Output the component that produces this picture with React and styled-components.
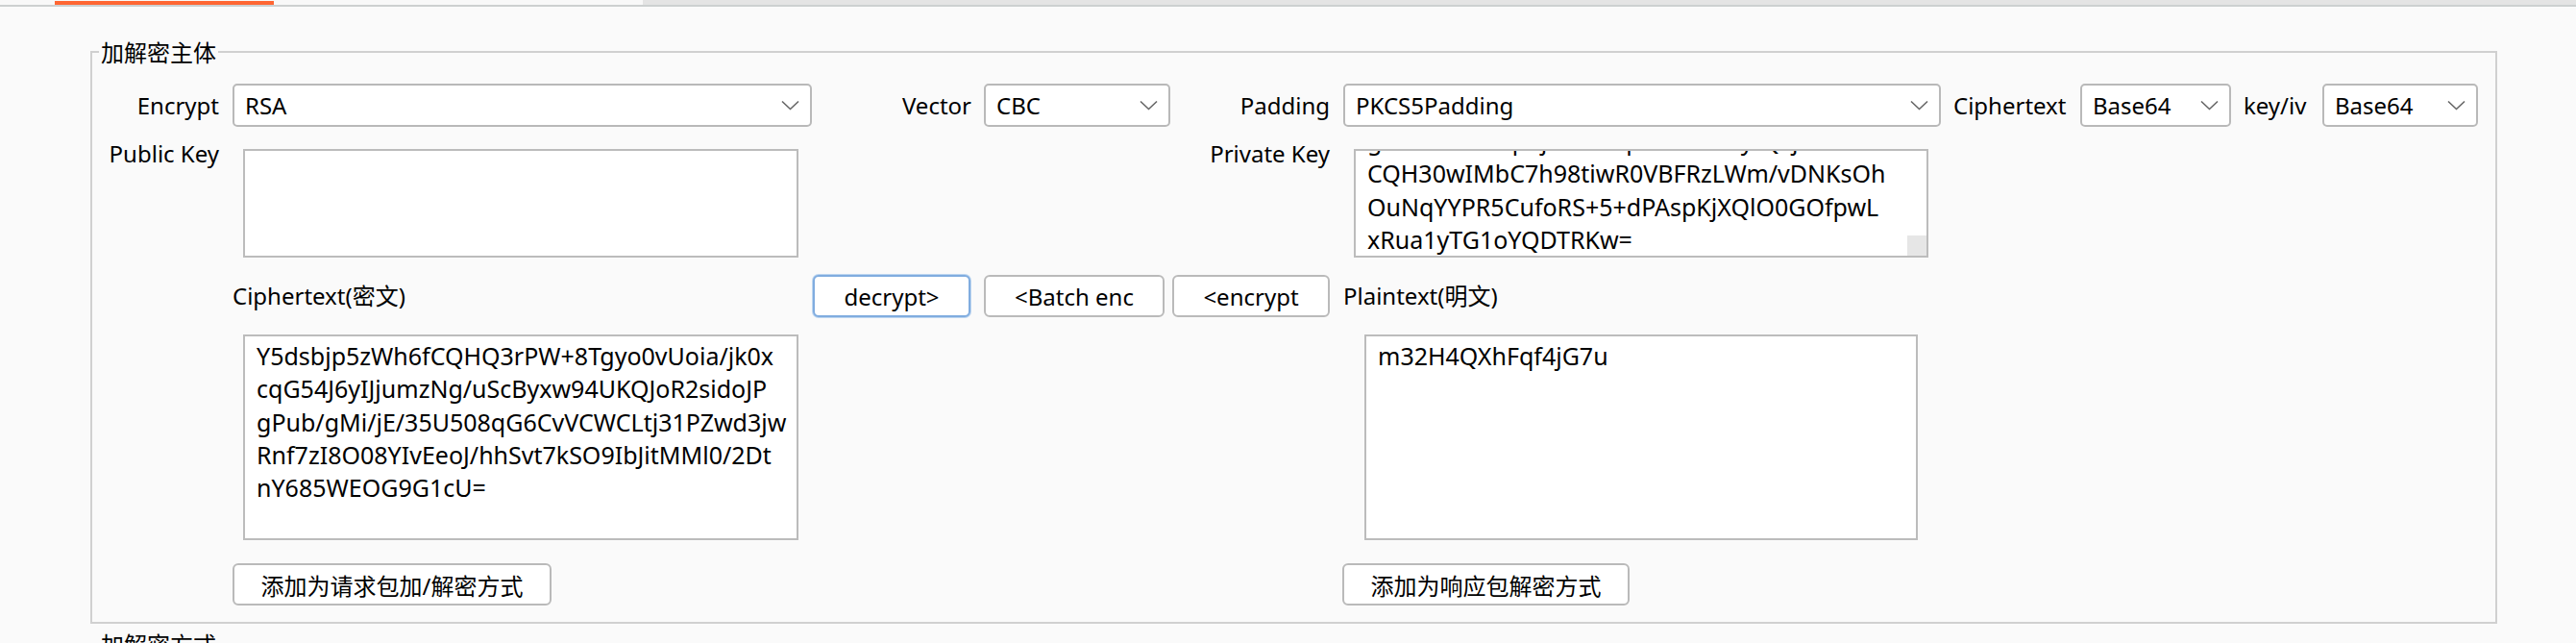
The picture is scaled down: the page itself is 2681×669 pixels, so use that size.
import React from "react";
import styled, { createGlobalStyle, css } from "styled-components";

const GlobalStyle = createGlobalStyle`
  html, body {
    margin: 0;
    padding: 0;
    background: #fafafa;
  }
  body {
    font-family: "Noto Sans", "Noto Sans CJK SC", sans-serif;
    font-size: 24px;
    color: #000;
  }
`;

const place = css`
  grid-column: ${(p) => p.$col};
  grid-row: ${(p) => p.$row};
  align-self: ${(p) => p.$align || "center"};
  justify-self: ${(p) => p.$justify || "start"};
  margin: ${(p) => p.$mt || 0}px ${(p) => p.$mr || 0}px 0 ${(p) => p.$ml || 0}px;
`;

const Page = styled.div`
  width: 2681px;
  height: 669px;
  overflow: hidden;
  background: #fafafa;
`;

const TabStrip = styled.div`
  display: flex;
  height: 5px;
  border-bottom: 2px solid #cdd0d0;
`;

const Tab = styled.div`
  width: 669px;
  box-sizing: border-box;
  padding: 1px 0 0 57px;
  background: #f8f8f8;
`;

const TabIndicator = styled.div`
  width: 228px;
  height: 4px;
  background: #ff6633;
`;

const TabRest = styled.div`
  flex: 1;
  background: #e4e4e4;
`;

const Body = styled.div`
  padding: 30px 0 0 94px;
`;

const Group = styled.fieldset`
  width: 2505px;
  box-sizing: border-box;
  min-width: 0;
  margin: ${(p) => p.$mt || 0}px 0 0 0;
  padding: 16px 0 17px 0;
  border: 2px solid #d0d0d0;
`;

const Legend = styled.legend`
  margin-left: 7px;
  padding: 0 2px;
  line-height: 34px;
  font-family: "Noto Sans CJK SC", sans-serif;
`;

const Grid = styled.div`
  display: grid;
  grid-template-columns: 146px 604px 178px 196px 178px 624px 1fr;
  grid-template-rows: 50px 113px 44px 214px 50px;
  row-gap: 18px;
`;

const Label = styled.div`
  ${place};
  width: ${(p) => (p.$w ? `${p.$w}px` : "auto")};
  white-space: nowrap;
  line-height: ${(p) => p.$lh || 34}px;
`;

const SelectBox = styled.div`
  ${place};
  display: flex;
  align-items: center;
  justify-content: space-between;
  box-sizing: border-box;
  width: ${(p) => p.$w}px;
  height: 45px;
  padding: 0 11px 0 11px;
  background: #fff;
  border: 2px solid #b9b9b9;
  border-radius: 5px;
  white-space: nowrap;
`;

const OptionGroup = styled.div`
  ${place};
  display: flex;
  align-items: center;
  gap: 13px;
`;

const TextBox = styled.div`
  ${place};
  position: relative;
  box-sizing: border-box;
  width: ${(p) => p.$w}px;
  height: ${(p) => p.$h}px;
  padding: 3px 12px 0 12px;
  background: #fff;
  border: 2px solid #bcbcbc;
  overflow: hidden;
  font-size: 25px;
  line-height: 34.3px;
`;

const Scrolled = styled.div`
  margin-top: ${(p) => p.$offset || 0}px;
`;

const Line = styled.div`
  white-space: pre;
`;

const ScrollThumb = styled.div`
  position: absolute;
  right: 0;
  bottom: 0;
  width: 20px;
  height: 21px;
  background: #e6e6e6;
`;

const Button = styled.button`
  ${place};
  box-sizing: border-box;
  width: ${(p) => p.$w}px;
  height: 44px;
  padding: 0;
  font: inherit;
  font-family: "Noto Sans", "Noto Sans CJK SC", sans-serif;
  color: #000;
  background: #fff;
  border: 2px solid ${(p) => (p.$focused ? "#80acdf" : "#bababa")};
  border-radius: 6px;
  box-shadow: ${(p) => (p.$focused ? "0 0 0 1px #bcd5f0" : "none")};
  white-space: nowrap;
`;

const Chevron = () => (
  <svg width="19" height="11" viewBox="0 0 19 11">
    <polyline points="1,1.5 9.5,9.5 18,1.5" fill="none" stroke="#666" strokeWidth="1.6" />
  </svg>
);

const Select = ({ value, ...rest }) => (
  <SelectBox {...rest}>
    <span>{value}</span>
    <Chevron />
  </SelectBox>
);

const cipherLines = [
  "Y5dsbjp5zWh6fCQHQ3rPW+8Tgyo0vUoia/jk0x",
  "cqG54J6yIJjumzNg/uScByxw94UKQJoR2sidoJP",
  "gPub/gMi/jE/35U508qG6CvVCWCLtj31PZwd3jw",
  "Rnf7zI8O08YIvEeoJ/hhSvt7kSO9IbJitMMl0/2Dt",
  "nY685WEOG9G1cU=",
];

const privateLines = [
  "gaTS5xE0kRq1/jaNWc8pLmNoVHy/Qzj3sB",
  "CQH30wIMbC7h98tiwR0VBFRzLWm/vDNKsOh",
  "OuNqYYPR5CufoRS+5+dPAspKjXQlO0GOfpwL",
  "xRua1yTG1oYQDTRKw=",
];

export default function App() {
  return (
    <Page>
      <GlobalStyle />
      <TabStrip>
        <Tab>
          <TabIndicator />
        </Tab>
        <TabRest />
      </TabStrip>
      <Body>
        <Group>
          <Legend>加解密主体</Legend>
          <Grid>
            <Label $col={1} $row={1} $align="start" $justify="end" $mr={14} $lh={45}>
              Encrypt
            </Label>
            <Select $col={2} $row={1} $align="start" $w={603} value="RSA" />
            <Label $col={3} $row={1} $align="start" $justify="end" $mr={13} $lh={45}>
              Vector
            </Label>
            <Select $col={4} $row={1} $align="start" $w={194} value="CBC" />
            <Label $col={5} $row={1} $align="start" $justify="end" $mr={14} $lh={45}>
              Padding
            </Label>
            <Select $col={6} $row={1} $align="start" $w={622} value="PKCS5Padding" />
            <OptionGroup $col={7} $row={1} $align="start" $ml={11}>
              <Label $lh={45} $w={119}>Ciphertext</Label>
              <Select $w={157} value="Base64" />
              <Label $lh={45} $w={69}>key/iv</Label>
              <Select $w={162} value="Base64" />
            </OptionGroup>

            <Label $col={1} $row={2} $align="start" $justify="end" $mr={14} $mt={-12}>
              Public Key
            </Label>
            <TextBox $col={2} $row={2} $align="start" $ml={11} $w={578} $h={113} />
            <Label $col={5} $row={2} $align="start" $justify="end" $mr={14} $mt={-12}>
              Private Key
            </Label>
            <TextBox $col={6} $row={2} $align="start" $ml={11} $w={598} $h={113}>
              <Scrolled $offset={-31}>
                {privateLines.map((l) => (
                  <Line key={l}>{l}</Line>
                ))}
              </Scrolled>
              <ScrollThumb />
            </TextBox>

            <Label $col={2} $row={3}>Ciphertext(密文)</Label>
            <Button $col={3} $row={3} $w={164} $focused>
              decrypt&gt;
            </Button>
            <Button $col={4} $row={3} $w={188}>
              &lt;Batch enc
            </Button>
            <Button $col={5} $row={3} $w={164}>
              &lt;encrypt
            </Button>
            <Label $col={6} $row={3}>Plaintext(明文)</Label>

            <TextBox $col={2} $row={4} $align="start" $ml={11} $w={578} $h={214}>
              {cipherLines.map((l) => (
                <Line key={l}>{l}</Line>
              ))}
            </TextBox>
            <TextBox $col={6} $row={4} $align="start" $ml={22} $w={576} $h={214}>
              <Line>m32H4QXhFqf4jG7u</Line>
            </TextBox>

            <Button $col={2} $row={5} $align="end" $w={332}>
              添加为请求包加/解密方式
            </Button>
            <Button $col={6} $row={5} $align="end" $ml={-1} $w={299}>
              添加为响应包解密方式
            </Button>
          </Grid>
        </Group>
        <Group $mt={4}>
          <Legend>加解密方式</Legend>
          <Grid />
        </Group>
      </Body>
    </Page>
  );
}
